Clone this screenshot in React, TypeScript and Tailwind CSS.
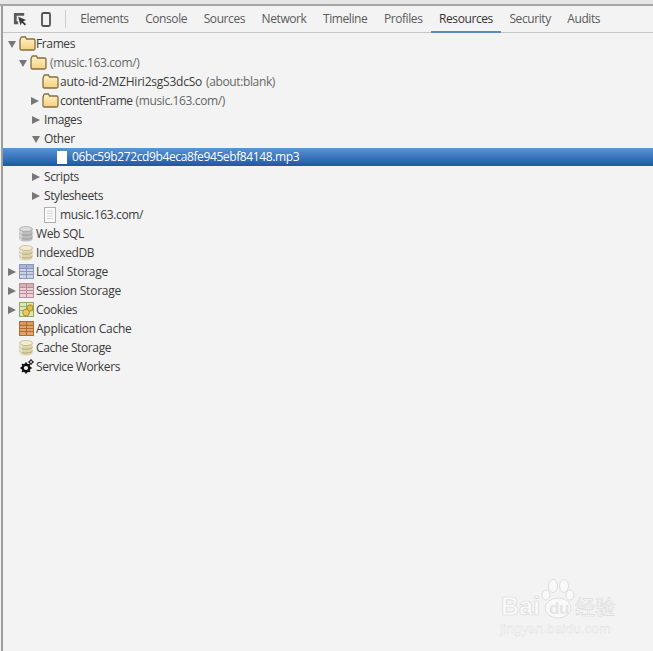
const font = "font-['Open_Sans','Noto_Sans',sans-serif]";

const tabs = ["Elements", "Console", "Sources", "Network", "Timeline", "Profiles", "Resources", "Security", "Audits"];

const Arrow = ({ open }: { open?: boolean }) => (
  <svg width="8" height="8" viewBox="0 0 8 8" className="shrink-0">
    {open ? <path d="M0 1h8L4 8z" fill="#777" /> : <path d="M0 0l8 4-8 4z" fill="#777" />}
  </svg>
);

const Folder = () => (
  <svg width="17" height="15" viewBox="0 0 17 15" className="shrink-0">
    <defs>
      <linearGradient id="fold" x1="0" y1="0" x2="0" y2="1">
        <stop offset="0" stopColor="#fff2c8" />
        <stop offset="1" stopColor="#f6cf7e" />
      </linearGradient>
    </defs>
    <path d="M1 4 L2 1.500 Q2.200 1 3 1 H6.500 L7.500 3 H14.500 Q16 3 16 4.500 V12.500 Q16 14 14.500 14 H2.500 Q1 14 1 12.500 Z" fill="url(#fold)" stroke="#82703f" strokeWidth="1.300" />
  </svg>
);

const Db = ({ top, bottom, edge }: { top: string; bottom: string; edge: string }) => (
  <svg width="14" height="16" viewBox="0 0 14 16" className="shrink-0">
    <path d="M.5 3v10c0 1.500 2.700 2.500 6.500 2.500s6.500-1 6.500-2.500V3z" fill={bottom} />
    <ellipse cx="7" cy="3" rx="6.500" ry="2.500" fill={top} stroke={edge} strokeWidth="0.500" />
    <path d="M.5 6.800c0 1.500 2.700 2.400 6.500 2.400s6.500-.9 6.500-2.400M.5 10.600c0 1.500 2.700 2.400 6.500 2.400s6.500-.9 6.500-2.400" fill="none" stroke={edge} strokeWidth="0.800" />
    <path d="M2 5v9M2 1.500" stroke="#fff" strokeOpacity="0.500" strokeWidth="1.500" />
  </svg>
);

const GridIcon = ({ fill, head, line }: { fill: string; head: string; line: string }) => (
  <svg width="15" height="15" viewBox="0 0 15 15" className="shrink-0">
    <rect x="0.500" y="0.500" width="14" height="14" fill={fill} stroke={line} />
    <rect x="1" y="1" width="13" height="3" fill={head} />
    <path d="M0.500 4.500h14M0.500 7.500h14M0.500 10.500h14M7.500 0.500v14" stroke={line} strokeWidth="1" />
  </svg>
);

const CookieIcon = () => (
  <svg width="16" height="15" viewBox="0 0 16 15" className="shrink-0">
    <rect x="0.500" y="0.500" width="14" height="14" fill="#d9e8b6" stroke="#8ea866" />
    <path d="M0.500 4.500h14M0.500 8.500h14M7.500 0.500v14" stroke="#9ab574" strokeWidth="1" />
    <circle cx="11" cy="6" r="3.200" fill="#e3bb45" stroke="#8a7226" strokeWidth="0.700" />
    <circle cx="7" cy="10.500" r="3.400" fill="#ecc955" stroke="#8a7226" strokeWidth="0.700" />
  </svg>
);

const Gears = () => (
  <svg width="14" height="15" viewBox="0 0 14 15" className="shrink-0">
    <circle cx="6" cy="9" r="3.300" fill="none" stroke="#111" strokeWidth="2.400" />
    <path d="M6 3.500v2M6 12.500v2M.5 9h2M9.500 9h2M2.100 5.100l1.400 1.400M8.500 11.500l1.400 1.400M2.100 12.900l1.400-1.400M8.500 6.500l1.400-1.400" stroke="#111" strokeWidth="1.800" />
    <circle cx="11" cy="3" r="1.500" fill="none" stroke="#111" strokeWidth="1.200" />
    <path d="M11 0v1M11 5v1M8 3h1M13 3h1" stroke="#111" strokeWidth="1" />
  </svg>
);

const DocIcon = () => (
  <svg width="12" height="16" viewBox="0 0 12 16" className="shrink-0">
    <rect x="0.500" y="0.500" width="11" height="15" fill="#fafafa" stroke="#b0b0b0" />
    <path d="M3 4h6M3 6.500h6M3 9h6M3 11.500h6" stroke="#d4d4d4" />
  </svg>
);

const dbGrey = { top: "#dcdcdc", bottom: "#bdbdbd", edge: "#8f8f8f" };
const dbTan = { top: "#f1ecd2", bottom: "#ddd5ab", edge: "#a49c72" };

export default function App() {
  return (
    <div className={`${font} w-[653px] h-[651px] bg-[#f3f3f3] flex flex-col overflow-hidden relative text-[12px] text-[#3a3a3a]`}>
      <div className="h-[6px] bg-[#e6e6e6] border-b-2 border-[#a6a6a6] shrink-0" />
      <div className="flex-1 flex flex-col border-l-2 border-[#9e9e9e] ml-[1px]">
        <div className="h-[27px] flex items-stretch border-b border-[#c6c6c6] shrink-0">
          <div className="flex items-center pl-[10px] gap-[14px] w-[64px] shrink-0">
            <svg width="14" height="14" viewBox="0 0 15 15">
              <path d="M1 1h11v3H4v6h1.500v3H1z" fill="#5a5a5a" />
              <path d="M5.500 5l8.500 3.500-3.200 1.400 3.200 3.200-1.400 1.400-3.200-3.200-1.300 3.200z" fill="#383838" />
            </svg>
            <svg width="10" height="15" viewBox="0 0 10 15">
              <rect x="1" y="1" width="8" height="13" rx="1.500" fill="#f3f3f3" stroke="#505050" strokeWidth="1.800" />
            </svg>
            <div className="w-px h-[18px] bg-[#cfcfcf]" />
          </div>
          <div className="flex items-stretch pl-[5px]">
            {tabs.map((t) => (
              <div
                key={t}
                className={`px-[8.300px] flex items-center tracking-[-0.42px] ${
                  t === "Resources" ? "text-[#333] border-b-2 border-[#5b89c0] -mb-px" : "text-[#5a5a5a]"
                }`}
              >
                {t}
              </div>
            ))}
          </div>
        </div>

        <div className="flex flex-col pt-[1px] tracking-[-0.38px]">
          <div className="h-[19px] flex items-center pl-[5px] gap-[3px]">
            <Arrow open />
            <Folder />
            <span className="ml-[-3px]">Frames</span>
          </div>
          <div className="h-[19px] flex items-center pl-[16px] gap-[3px]">
            <Arrow open />
            <Folder />
            <span className="text-[#666]">(music.163.com/)</span>
          </div>
          <div className="h-[19px] flex items-center pl-[39px] gap-[1px]">
            <Folder />
            <span className="tracking-[-0.22px]">auto-id-2MZHiri2sgS3dcSo</span>
            <span className="text-[#666] ml-[3px]">(about:blank)</span>
          </div>
          <div className="h-[19px] flex items-center pl-[28px] gap-[3px]">
            <Arrow />
            <Folder />
            <span className="ml-[-2px] tracking-[-0.5px]">contentFrame</span>
            <span className="text-[#666]">(music.163.com/)</span>
          </div>
          <div className="h-[19px] flex items-center pl-[29px] gap-[4px]">
            <Arrow />
            <span>Images</span>
          </div>
          <div className="h-[19px] flex items-center pl-[29px] gap-[4px]">
            <Arrow open />
            <span>Other</span>
          </div>
          <div className="h-[18px] mb-[1px] flex items-center pl-[54px] gap-[5px] bg-gradient-to-b from-[#5a94d3] to-[#1d58a6] text-white">
            <div className="w-[10px] h-[13px] bg-white shrink-0" />
            <span>06bc59b272cd9b4eca8fe945ebf84148.mp3</span>
          </div>
          <div className="h-[19px] flex items-center pl-[29px] gap-[4px]">
            <Arrow />
            <span>Scripts</span>
          </div>
          <div className="h-[19px] flex items-center pl-[29px] gap-[4px]">
            <Arrow />
            <span>Stylesheets</span>
          </div>
          <div className="h-[19px] flex items-center pl-[41px] gap-[4px]">
            <DocIcon />
            <span>music.163.com/</span>
          </div>
          <div className="h-[19px] flex items-center pl-[16px] gap-[3px]">
            <Db {...dbGrey} />
            <span>Web SQL</span>
          </div>
          <div className="h-[19px] flex items-center pl-[16px] gap-[3px]">
            <Db {...dbTan} />
            <span>IndexedDB</span>
          </div>
          <div className="h-[19px] flex items-center pl-[5px] gap-[3px]">
            <Arrow />
            <GridIcon fill="#ccd3e8" head="#a9b4d4" line="#8a97ba" />
            <span className="ml-[-1px] tracking-[-0.22px]">Local Storage</span>
          </div>
          <div className="h-[19px] flex items-center pl-[5px] gap-[3px]">
            <Arrow />
            <GridIcon fill="#ecd0d5" head="#d8aeb6" line="#b58e97" />
            <span className="ml-[-1px] tracking-[-0.22px]">Session Storage</span>
          </div>
          <div className="h-[19px] flex items-center pl-[5px] gap-[3px]">
            <Arrow />
            <CookieIcon />
            <span className="ml-[-2px]">Cookies</span>
          </div>
          <div className="h-[19px] flex items-center pl-[16px] gap-[2px]">
            <GridIcon fill="#e2a566" head="#d9985a" line="#a86f38" />
            <span className="tracking-[-0.25px]">Application Cache</span>
          </div>
          <div className="h-[19px] flex items-center pl-[16px] gap-[3px]">
            <Db {...dbTan} />
            <span>Cache Storage</span>
          </div>
          <div className="h-[19px] flex items-center pl-[17px] gap-[2px]">
            <Gears />
            <span>Service Workers</span>
          </div>
        </div>
      </div>

      {/* baidu watermark */}
      <svg width="36" height="42" viewBox="0 0 36 42" className="absolute left-[540px] top-[578px]">
        <g fill="#f9f9f9" stroke="#dedede" strokeWidth="1">
          <ellipse cx="6" cy="17" rx="4" ry="5" />
          <ellipse cx="13" cy="8" rx="4.500" ry="6.500" />
          <ellipse cx="24" cy="8" rx="4.500" ry="6.500" />
          <ellipse cx="30" cy="17" rx="4" ry="5" />
          <ellipse cx="18" cy="30" rx="13" ry="10" />
        </g>
      </svg>
      <span className="absolute left-[549px] top-[600px] font-['Liberation_Sans',sans-serif] text-[17px] leading-[17px] font-bold tracking-[-0.5px] text-[#e4e4e4]">du</span>
      <span className="absolute left-[501px] top-[592px] font-['Liberation_Sans',sans-serif] text-[25px] leading-[28px] font-bold text-[#fafafa] [-webkit-text-stroke:0.7px_#dadada]">Bai</span>
      <span className="absolute left-[575px] top-[595px] font-['Noto_Sans_CJK_SC',sans-serif] text-[20px] leading-[24px] text-[#fafafa] [-webkit-text-stroke:0.6px_#dadada]">经验</span>
      <span className="absolute left-[500px] top-[621px] font-['Liberation_Sans',sans-serif] text-[13.500px] leading-[16px] tracking-[0.1px] text-[#fafafa] [-webkit-text-stroke:0.4px_#dedede]">jingyan.baidu.com</span>
    </div>
  );
}
